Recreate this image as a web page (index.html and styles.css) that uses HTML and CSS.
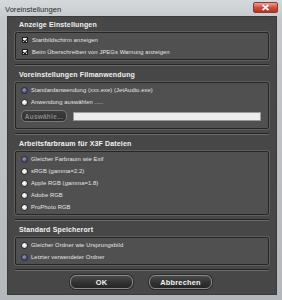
FILE: index.html
```html
<!DOCTYPE html>
<html lang="de">
<head>
    <meta charset="UTF-8">
    <title>Voreinstellungen</title>
    <link rel="stylesheet" href="styles.css">
</head>
<body>
    <div class="window">
        <div class="titlebar">
            <span class="title">Voreinstellungen</span>
            <button class="close-btn">
                <svg width="9" height="7" viewBox="0 0 9 7"><path d="M1.5 0.8 L7.5 6.2 M7.5 0.8 L1.5 6.2" stroke="#fff" stroke-width="1.8"/></svg>
            </button>
        </div>

        <div class="content">
            <h2>Anzeige Einstellungen</h2>
            <div class="group">
                <label class="row"><span class="check"></span>Startbildschirm anzeigen</label>
                <label class="row"><span class="check"></span>Beim Überschreiben von JPEGs Warnung anzeigen</label>
            </div>
            <div class="sep"></div>

            <h2>Voreinstellungen Filmanwendung</h2>
            <div class="group group-film">
                <label class="row"><span class="radio on"></span>Standardanwendung (xxx.exe) (JetAudio.exe)</label>
                <label class="row"><span class="radio"></span>Anwendung auswählen .....</label>
                <div class="pick-row">
                    <button class="pick-btn">Auswähle...</button>
                    <div class="path-field"></div>
                </div>
            </div>
            <div class="sep"></div>

            <h2>Arbeitsfarbraum für X3F Dateien</h2>
            <div class="group">
                <label class="row"><span class="radio on"></span>Gleicher Farbraum wie Exif</label>
                <label class="row"><span class="radio"></span>sRGB (gamma=2.2)</label>
                <label class="row"><span class="radio"></span>Apple RGB (gamma=1.8)</label>
                <label class="row"><span class="radio"></span>Adobe RGB</label>
                <label class="row"><span class="radio"></span>ProPhoto RGB</label>
            </div>
            <div class="sep"></div>

            <h2>Standard Speicherort</h2>
            <div class="group">
                <label class="row"><span class="radio"></span>Gleicher Ordner wie Ursprungsbild</label>
                <label class="row"><span class="radio on"></span>Letzter verwendeter Ordner</label>
            </div>
            <div class="sep"></div>

            <div class="actions">
                <button class="btn">OK</button>
                <button class="btn">Abbrechen</button>
            </div>
        </div>
    </div>
</body>
</html>
```

FILE: styles.css
```css
:root {
    --frame: #c4c8cc;
    --dark: #474747;
    --box: #505050;
    --line-dark: #262626;
    --line-light: #6a6a6a;
    --text: #e6e6e6;
}

* {
    margin: 0;
    padding: 0;
    box-sizing: border-box;
    font-family: 'Liberation Sans', Arial, sans-serif;
}

body {
    width: 282px;
    height: 300px;
    overflow: hidden;
    background: #6b6e72;
}

.window {
    width: 282px;
    height: 300px;
    background: linear-gradient(to bottom, #d6d9dc, var(--frame) 20px, #b4b8bc);
    padding: 0 5px 5px 7px;
    display: flex;
    flex-direction: column;
}

.titlebar {
    height: 16px;
    display: flex;
    align-items: center;
    justify-content: space-between;
    margin-left: -2px;
}

.title {
    font-size: 7.6px;
    color: #2a2a2a;
    padding-top: 2px;
}

.close-btn {
    width: 25px;
    height: 11px;
    margin-right: -1px;
    margin-bottom: 2px;
    border: 1px solid #8a3a34;
    border-radius: 2px;
    background: linear-gradient(to bottom, #e8a39a, #d0503f 50%, #b8301f);
    display: flex;
    align-items: center;
    justify-content: center;
}

.content {
    flex: 1;
    background: var(--dark);
    border: 1px solid #3a3a3a;
    padding: 3px 7px 0 7px;
}

h2 {
    font-size: 7px;
    font-weight: bold;
    color: #f2f2f2;
    height: 10px;
    line-height: 10px;
    padding-left: 4px;
    margin: 0 0 2px;
    letter-spacing: 0.15px;
}

.group {
    background: var(--box);
    border: 1px solid var(--line-dark);
    border-radius: 2px;
    box-shadow: 0 0 0 1px #5e5e5e;
    padding: 1px 0 1px 5px;
}

.row {
    display: flex;
    align-items: center;
    height: 12px;
    font-size: 5.8px;
    color: var(--text);
    letter-spacing: 0.1px;
}

.check {
    width: 6px;
    height: 6px;
    margin: 0 4px 0 1px;
    background: #f4f4f4;
    border: 1px solid #1e1e1e;
    position: relative;
}

.check::after {
    content: "";
    position: absolute;
    left: 1px;
    top: -1px;
    width: 2px;
    height: 4px;
    border: solid #111;
    border-width: 0 1.5px 1.5px 0;
    transform: rotate(40deg);
}

.radio {
    width: 7px;
    height: 7px;
    border-radius: 50%;
    margin-right: 3px;
    background: radial-gradient(circle at 40% 35%, #ffffff, #e4e4e4 55%, #9a9a9a);
    border: 1px solid #2a2a2a;
}

.radio.on {
    background: radial-gradient(circle at 40% 35%, #9a9ac8, #55558a 60%, #2c2c50);
}

.group-film {
    padding-bottom: 6px;
}

.pick-row {
    display: flex;
    align-items: center;
    height: 12px;
    margin-top: 2px;
}

.pick-btn {
    width: 46px;
    height: 12px;
    border-radius: 5px;
    border: 1px solid #777;
    background: linear-gradient(to bottom, #3e3e3e, #2c2c2c);
    color: #8a8a8a;
    font-size: 6.4px;
    font-weight: bold;
    letter-spacing: 0.3px;
}

.path-field {
    width: 188px;
    height: 9px;
    margin-left: 6px;
    background: #ededed;
    border: 1px solid #9a9a9a;
}

.sep {
    height: 2px;
    margin: 4px 0 4px;
    border-top: 1px solid var(--line-dark);
    border-bottom: 1px solid var(--line-light);
}

.actions {
    display: flex;
    justify-content: center;
    gap: 16px;
    margin-top: 3px;
    padding-right: 2px;
}

.btn {
    width: 63px;
    height: 14px;
    border-radius: 6px;
    border: 1px solid #8c8c8c;
    background: linear-gradient(to bottom, #4a4a4a, #303030 60%, #262626);
    box-shadow: 0 0 0 1px #2a2a2a;
    color: #f4f4f4;
    font-size: 7.4px;
    font-weight: bold;
    letter-spacing: 0.2px;
}
```
